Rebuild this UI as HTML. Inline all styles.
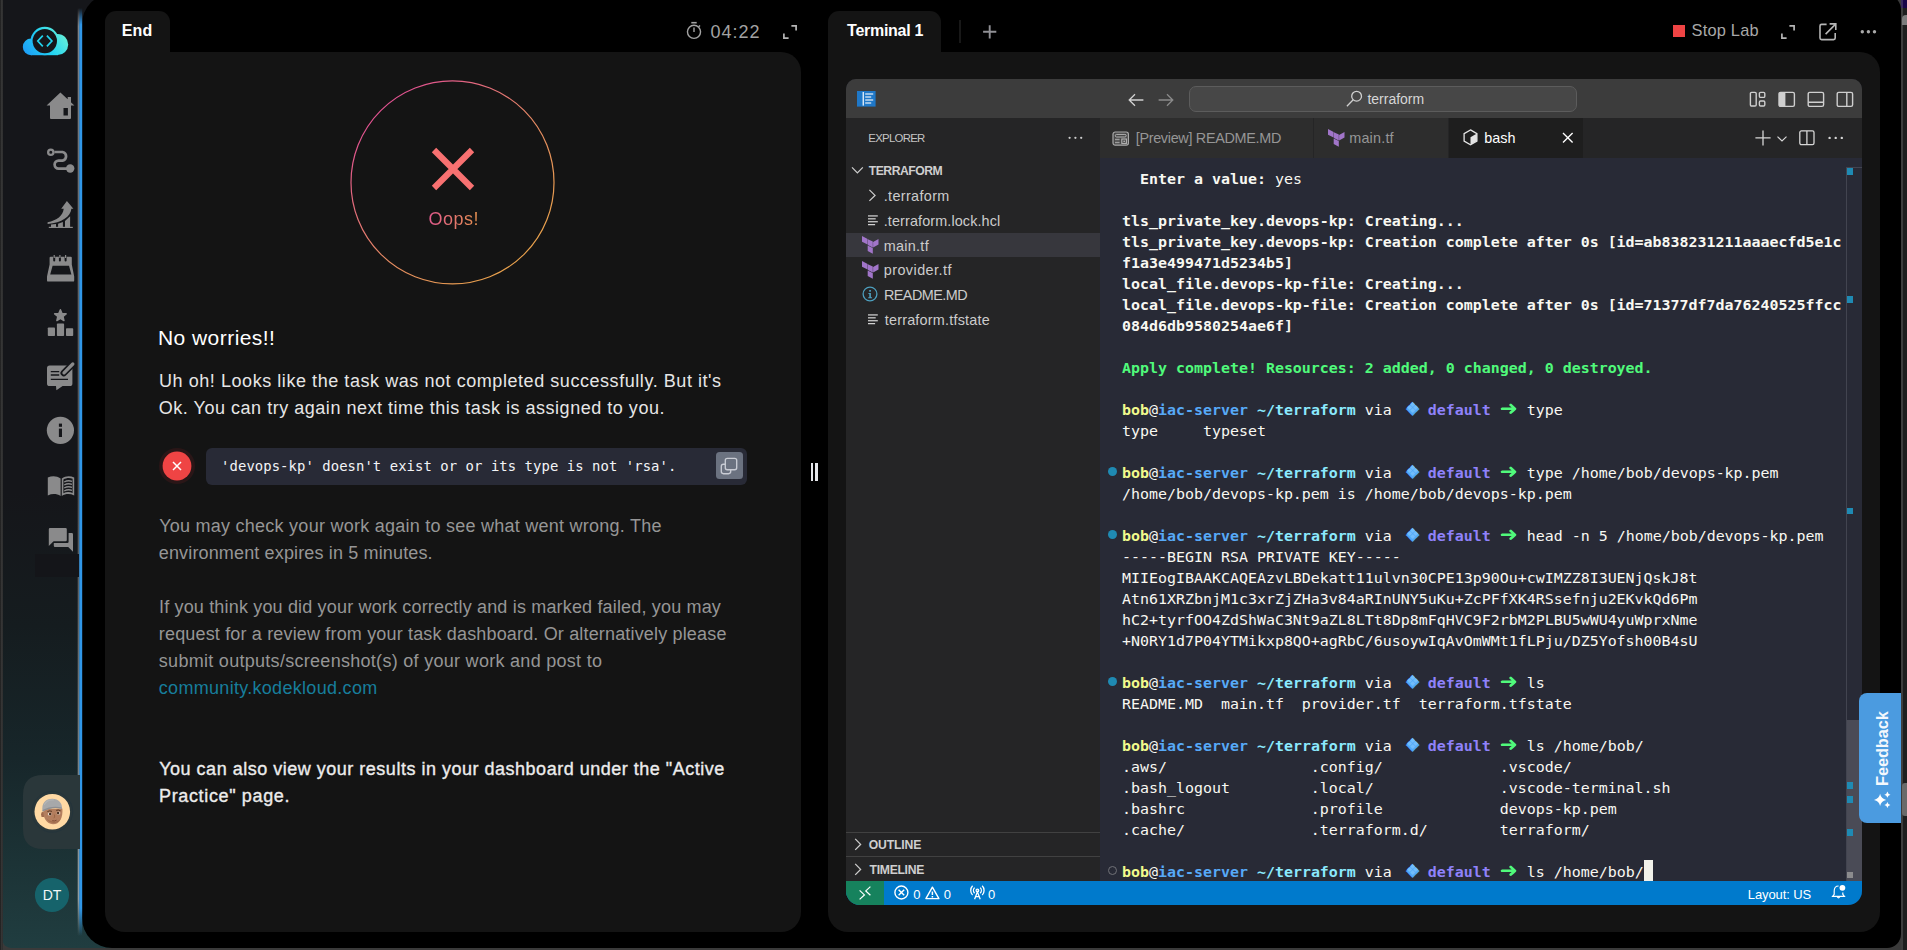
<!DOCTYPE html>
<html lang="en">
<head>
<meta charset="utf-8">
<title>KodeKloud Lab</title>
<style>
*{box-sizing:border-box;margin:0;padding:0}
html,body{width:1907px;height:950px;overflow:hidden;background:#000}
body{position:relative;font-family:"Liberation Sans",sans-serif;color:#fff;-webkit-font-smoothing:antialiased}
.abs{position:absolute}
svg{display:block;position:absolute;overflow:visible}
/* ---------- window frame ---------- */
#frame{position:absolute;left:0;top:0;width:1907px;height:950px;background:#3a3a3a}
#side{position:absolute;left:2px;top:0;width:110px;height:948px;border-radius:0 0 0 9px;background:linear-gradient(180deg,#15161a 0%,#15161a 52%,#151c1f 66%,#17262a 80%,#1c3336 91%,#203d40 100%)}
#sideedge{position:absolute;left:0;top:0;width:3px;height:950px;background:linear-gradient(90deg,#1b1b1b 0,#3a3a3a 60%,#2a2a2a 100%)}
#main{position:absolute;left:82px;top:-6px;width:1819px;height:954.4px;background:#000;border-radius:30px 16px 14px 30px}
#rstrip{position:absolute;left:1901px;top:0;width:6px;height:950px;background:linear-gradient(90deg,#3d3d3d 0,#3d3d3d 2px,#1e1e1e 2.4px,#1e1e1e 100%)}
#glow{position:absolute;left:77px;top:10px;width:5px;height:926px}
/* ---------- panels ---------- */
.panel{position:absolute;background:#141414}
.tab{position:absolute;background:#141414;border-radius:11px 11px 0 0}
.tabt{position:absolute;font-weight:bold;font-size:16px;line-height:20px;white-space:nowrap;color:#fff}
.hdr{position:absolute;white-space:nowrap;color:#a3a3a3}
/* left content */
.p{position:absolute;left:159px;white-space:nowrap;font-size:18px;line-height:27px}
.lt{color:#969696;font-size:18px}
.uh{color:#e6e6e6;font-size:18px}
/* vscode */
#vs{position:absolute;left:846px;top:79px;width:1016px;height:826px;border-radius:10px 10px 14px 14px;overflow:hidden;background:#282a36;font-family:"Liberation Sans",sans-serif}
#vs .t{position:absolute;white-space:nowrap}
#term{position:absolute;left:276px;top:90px;font-family:"DejaVu Sans Mono","Liberation Mono",monospace;font-size:14.95px;line-height:21px;color:#f8f8f2;white-space:pre}
#term b{font-weight:bold}
#term .r{display:block;height:21px}
.y{color:#f1fa8c}.bl{color:#57a9f7}.cy{color:#8be9fd}.pu{color:#8f82fb}.g{color:#50fa7b}
.w2{display:inline-block;width:18px;height:21px;vertical-align:top;position:relative}

.dia i{font-style:normal;position:absolute;left:-0.2px;top:-3.2px;width:24px;text-align:center;color:#51a8f6;font-size:23px;line-height:21px;font-weight:normal}
.dia::before{content:"\2756";position:absolute;left:-0.2px;top:-3.6px;width:24px;text-align:center;color:#72bdfb;font-size:20px;line-height:21px;font-weight:normal;z-index:1}
.arr i{font-style:normal;position:absolute;left:-3.2px;top:-2px;width:24px;text-align:center;color:#50fa7b;font-size:22px;line-height:21px;font-family:"DejaVu Sans",sans-serif;font-weight:bold;transform:scaleY(.9)}
.cur{display:inline-block;width:9px;height:21px;vertical-align:top;background:#f1f1ea;position:relative;top:-2px}
</style>
<style id="fit">
#t_end{letter-spacing:0.100px;margin-left:-0.80px;margin-top:0.60px}
#t_time{letter-spacing:1.000px;margin-left:-0.60px;margin-top:0.80px}
#t_oops{letter-spacing:0.500px;margin-left:0.00px;margin-top:1.20px}
#t_nw{letter-spacing:0.445px;margin-left:-1.00px;margin-top:0.40px}
#t_uh1{letter-spacing:0.557px;margin-left:0.00px;margin-top:0.40px}
#t_uh2{letter-spacing:0.523px;margin-left:-0.20px;margin-top:0.60px}
#t_p1a{letter-spacing:0.252px;margin-left:0.20px;margin-top:1.00px}
#t_p1b{letter-spacing:0.145px;margin-left:-0.20px;margin-top:0.60px}
#t_p2a{letter-spacing:0.168px;margin-left:0.00px;margin-top:1.00px}
#t_p2b{letter-spacing:0.164px;margin-left:-0.20px;margin-top:1.00px}
#t_p2c{letter-spacing:0.288px;margin-left:-0.20px;margin-top:1.00px}
#t_p2d{letter-spacing:0.301px;margin-left:-0.20px;margin-top:1.00px}
#t_p3a{letter-spacing:0.509px;margin-left:0.20px;margin-top:0.00px}
#t_p3b{letter-spacing:0.645px;margin-left:0.00px;margin-top:0.20px}
#t_term1{letter-spacing:-0.279px;margin-left:0.50px;margin-top:1.00px}
#t_stop{letter-spacing:0.214px;margin-left:-0.50px;margin-top:-1.50px}
#t_expl{letter-spacing:-0.716px;margin-left:-0.00px;margin-top:0.00px}
#t_tf{letter-spacing:-0.500px;margin-left:0.50px;margin-top:1.00px}
#t_row0{letter-spacing:0.357px;margin-left:-1.00px;margin-top:1.00px}
#t_row1{letter-spacing:0.123px;margin-left:-1.00px;margin-top:1.00px}
#t_row2{letter-spacing:0.299px;margin-left:-1.00px;margin-top:1.00px}
#t_row3{letter-spacing:0.450px;margin-left:-1.00px;margin-top:1.00px}
#t_row4{letter-spacing:-0.525px;margin-left:-0.80px;margin-top:1.00px}
#t_row5{letter-spacing:0.219px;margin-left:-0.00px;margin-top:1.00px}
#t_outline{letter-spacing:-0.167px;margin-left:0.20px;margin-top:1.00px}
#t_timeline{letter-spacing:-0.314px;margin-left:1.00px;margin-top:0.50px}
#t_tab1{letter-spacing:-0.306px;margin-left:-0.50px;margin-top:0.50px}
#t_tab2{letter-spacing:0.200px;margin-left:-1.00px;margin-top:0.50px}
#t_tab3{letter-spacing:-0.000px;margin-left:-1.00px;margin-top:0.50px}
#t_search{letter-spacing:-0.000px;margin-left:0.00px;margin-top:-0.00px}
#t_s0{letter-spacing:4.900px;margin-left:0.50px;margin-top:2.00px}
#t_s1{letter-spacing:0.000px;margin-left:0.20px;margin-top:2.00px}
#t_s2{letter-spacing:0.000px;margin-left:0.00px;margin-top:2.00px}
#t_lay{letter-spacing:-0.112px;margin-left:-1.00px;margin-top:2.00px}
#t_code{letter-spacing:0.068px;margin-left:-1.50px;margin-top:0.00px}
</style>
</head>
<body>
<div id="frame"></div>
<div id="side"></div>
<div id="sideedge"></div>
<div id="main"></div>
<div id="rstrip"></div>
<div class="abs" id="rs1" style="left:1901px;top:0;width:6px;height:7.6px;background:linear-gradient(90deg,#3b2b5e 0,#3b2b5e 1.8px,#1a0549 2px)"></div>
<div class="abs" style="left:1902.4px;top:15px;width:5px;height:10.4px;background:#7c7c7c;border-radius:4px 0 0 0"></div>
<div class="abs" style="left:1902.2px;top:783px;width:5px;height:33px;background:#6a6a6a;border-radius:3px 0 0 3px"></div>

<!--SIDEBAR-->
<svg id="sidesvg" style="left:0;top:0" width="120" height="950" viewBox="0 0 120 950">
<defs>
<linearGradient id="lg" gradientUnits="userSpaceOnUse" x1="26" y1="56" x2="64" y2="30"><stop offset="0" stop-color="#1d9cf7"/><stop offset=".5" stop-color="#22d3f3"/><stop offset="1" stop-color="#6af0d6"/></linearGradient>
<linearGradient id="bar" gradientUnits="userSpaceOnUse" x1="0" y1="8" x2="0" y2="936"><stop offset="0" stop-color="#3097e8" stop-opacity="0"/><stop offset=".018" stop-color="#3097e8"/><stop offset=".97" stop-color="#3097e8"/><stop offset="1" stop-color="#3097e8" stop-opacity="0"/></linearGradient>
<linearGradient id="barw" gradientUnits="userSpaceOnUse" x1="0" y1="8" x2="0" y2="936"><stop offset="0" stop-color="#cfd6dc" stop-opacity="0"/><stop offset=".02" stop-color="#aeb6bd" stop-opacity=".9"/><stop offset=".5" stop-color="#8f979d" stop-opacity=".55"/><stop offset=".96" stop-color="#c5ccd0" stop-opacity=".9"/><stop offset="1" stop-color="#cfd6dc" stop-opacity="0"/></linearGradient>
<linearGradient id="barsh" x1="0" y1="0" x2="1" y2="0"><stop offset="0" stop-color="#000" stop-opacity="0"/><stop offset="1" stop-color="#000" stop-opacity=".35"/></linearGradient>
</defs>
<!-- glow + blue bar -->
<rect x="77.2" y="8" width="1.2" height="928" fill="url(#barw)" opacity=".3"/>
<rect x="78.2" y="8" width="1.3" height="928" fill="url(#barw)" opacity=".9"/>
<rect x="79.3" y="8" width="2.9" height="928" fill="url(#bar)"/>
<!-- logo -->
<g fill="url(#lg)">
<circle cx="44.8" cy="41" r="14.2"/><circle cx="31.1" cy="46.9" r="8.3"/><circle cx="57.6" cy="44.5" r="10.6"/><rect x="31" y="45" width="27" height="10.2"/>
</g>
<circle cx="44.8" cy="41.1" r="12.2" fill="#15161a"/>
<path d="M42.8 35.6 L37.8 41 L42.8 46.4 M46.9 35.6 L51.9 41 L46.9 46.4" fill="none" stroke="#22d3ee" stroke-width="1.7"/>
<g fill="#8a8a8b">
<!-- home -->
<path d="M60.4 92.4 L74.4 105.6 L71 105.6 L71 118 Q71 119 70 119 L51 119 Q50 119 50 118 L50 105.6 L46.6 105.6 Z M67.7 97 h3.3 v5.5 l-3.3 -3.1 Z"/>
<rect x="63.5" y="108" width="4.4" height="7.5" fill="#15161a"/>
<!-- route -->
<circle cx="70.2" cy="168.5" r="4.2"/>
<!-- growth -->
<path d="M66.9 201 L73.4 208.8 L71.4 208.8 C70.6 216.5 62 223 47.6 223.9 L47.6 222.3 C57 220.6 63 215.5 63.7 208.8 L61.2 208.8 Z"/>
<path d="M51 224.6 L56 224.1 V227 H51 Z"/><path d="M58.1 223.7 L62.9 222 V227 H58.1 Z"/><path d="M65 221 L70.1 216.2 V227 H65 Z"/><rect x="48.8" y="226.8" width="24" height="1.2"/>
<!-- calendar -->
<path d="M50.6 256.8 H70.8 Q71.8 256.8 71.8 257.8 V264.4 L74.2 276.6 V280.4 Q74.2 281.6 73 281.6 H48.2 Q47 281.6 47 280.4 V276.6 L49.6 264.4 V257.8 Q49.6 256.8 50.6 256.8 Z M52.6 265.8 L50.2 274.6 H71.4 L69 265.8 Z" fill-rule="evenodd"/>
<g fill="#15161a"><rect x="53.2" y="256" width="2" height="5.4" rx="1"/><rect x="58.9" y="256" width="2" height="5.4" rx="1"/><rect x="64.6" y="256" width="2" height="5.4" rx="1"/></g>
<rect x="53.6" y="255" width="1.2" height="3"/><rect x="59.3" y="255" width="1.2" height="3"/><rect x="65" y="255" width="1.2" height="3"/>
<!-- leaderboard -->
<path d="M60.40 309.70 L61.99 313.52 L66.11 313.85 L62.97 316.53 L63.93 320.55 L60.40 318.40 L56.87 320.55 L57.83 316.53 L54.69 313.85 L58.81 313.52 Z" stroke="#8a8a8b" stroke-width="1.5" stroke-linejoin="round"/>
<rect x="47.8" y="327.4" width="7.2" height="8.6" rx=".8"/><rect x="56.9" y="323.6" width="7.2" height="12.4" rx=".8"/><rect x="66" y="328.2" width="7.2" height="7.8" rx=".8"/>
<!-- feedback -->
<path d="M49.6 365.6 H69.8 Q72.4 365.6 72.4 368.2 V383.4 Q72.4 386 69.8 386 H62.6 L56.4 390.2 L56 386 H49.6 Q47 386 47 383.4 V368.2 Q47 365.6 49.6 365.6 Z"/>
<g stroke="#15161a" stroke-width="1.3" fill="none"><path d="M50.8 371.6 H59.2 M50.8 375 H59.2 M50.8 379.3 H68"/></g>
<path d="M63.8 373 L72.6 364.2" stroke="#15161a" stroke-width="6.6" stroke-linecap="round"/>
<path d="M64 372.8 L72.8 364" stroke="#8a8a8b" stroke-width="3.3" stroke-linecap="round"/>
<!-- info -->
<circle cx="60.4" cy="430.3" r="13.6"/>
<rect x="58.9" y="423.6" width="3.1" height="3.2" fill="#15161a"/><rect x="58.9" y="428.6" width="3.1" height="8.4" fill="#15161a"/>
<!-- book -->
<path d="M47.8 477.6 C52 475.6 56.6 475.8 60.6 478.4 L60.6 496 C56.6 493.6 52 493.5 47.8 495.6 Z"/>
<path d="M61.8 478.4 C65.6 475.8 70.2 475.6 74.2 477.6 L74.2 495.6 C70.2 493.5 65.6 493.6 61.8 496 Z M63.4 479.6 L63.4 493.2 C66.4 491.8 69.6 491.8 72.6 493 L72.6 478.8 C69.6 477.6 66.4 477.8 63.4 479.6 Z" fill-rule="evenodd"/>
<path d="M64.2 482 C66.8 480.6 69.4 480.5 72 481.4 M64.2 485 C66.8 483.6 69.4 483.5 72 484.4 M64.2 488 C66.8 486.6 69.4 486.5 72 487.4 M64.2 491 C66.8 489.6 69.4 489.5 72 490.4" stroke="#8a8a8b" stroke-width="1.4" fill="none"/>
<!-- forum -->
<path d="M50 528 H65.6 Q66.8 528 66.8 529.2 V540 Q66.8 541.2 65.6 541.2 H53.6 L48.8 546 V529.2 Q48.8 528 50 528 Z"/>
<path d="M68.6 533 H71.8 Q73 533 73 534.2 V551.8 L68.2 547 H55 Q53.8 547 53.8 545.8 V543 H67.4 Q68.6 543 68.6 541.8 Z"/>
</g>
<!-- route strokes -->
<g fill="none" stroke="#8a8a8b">
<circle cx="50.8" cy="152.2" r="2.65" stroke-width="2.3"/>
<path d="M54.4 152 H62.6 A4.4 4.4 0 0 1 62.6 160.6 H58.6 A4 4 0 0 0 58.6 168.6 H67" stroke-width="2.7"/>
</g>
<!-- faint rect -->
<rect x="35" y="554" width="44" height="23" fill="#141519"/>
<!-- avatar box -->
<path d="M43 775 H80 V849 H43 Q23 849 23 829 V795 Q23 775 43 775 Z" fill="#2a373a"/>
<circle cx="52.3" cy="811.8" r="20.4" fill="none" stroke="#24343a" stroke-width="1"/>
<circle cx="52.3" cy="811.7" r="17.8" fill="#ffd9a4"/>
<!-- face -->
<g>
<ellipse cx="42.9" cy="814.4" rx="1.9" ry="2.7" fill="#a06a4c"/>
<path d="M43.4 809 C42.6 817.6 46.4 824 53 824.2 C59.6 824.2 63 818 62.4 808.4 Z" fill="#b37e5e"/>
<path d="M46.6 818.6 C49 824.2 58 824.6 61 818.4 C58.6 822.4 50.4 822.8 46.6 818.6Z" fill="#93603f" opacity=".55"/>
<path d="M42.6 811.6 C41 803 46 798.6 52.4 798.7 C58.6 798.8 62.6 803 61.9 808.8 C56 807 48.6 808 42.6 811.6 Z" fill="#a7a8aa"/>
<path d="M42.6 811.6 C48.6 808 56 807 61.9 808.8 L61.7 807.5 C56 805.8 48.4 806.6 42.5 810 Z" fill="#8d8e92"/>
<path d="M44.2 805 C46 801 50 799.6 54 800" stroke="#b9babc" stroke-width="1.2" fill="none" opacity=".6"/>
<ellipse cx="49.7" cy="814" rx="1.9" ry="1.5" fill="#e9dfd6"/><ellipse cx="58.5" cy="813" rx="1.8" ry="1.5" fill="#e9dfd6"/>
<circle cx="50.1" cy="814" r="1.25" fill="#4a3020"/><circle cx="58.1" cy="813" r="1.25" fill="#4a3020"/>
<path d="M47.4 811.6 Q49.6 810.2 52 811.4 M56.2 810.4 Q58.4 809.4 60.6 810.8" stroke="#50321f" stroke-width=".9" fill="none"/>
<path d="M54.4 814.6 Q55.2 817.6 53.8 818.2" stroke="#93603f" stroke-width=".8" fill="none"/>
<path d="M52.2 820.6 Q54.4 821.4 56.6 820.2" stroke="#7d4a33" stroke-width=".9" fill="none"/>
</g>
<path d="M70 779.6 L79 777.6 M70 842 L79 844.6" stroke="#3a484b" stroke-width=".8" stroke-dasharray="2 2" opacity=".0"/>
<!-- DT -->
<circle cx="52" cy="895" r="17.1" fill="#16636b"/>
<text x="52" y="900" text-anchor="middle" font-family="Liberation Sans, sans-serif" font-size="14" fill="#f2f7f7">DT</text>
</svg>
<!--/SIDEBAR-->
<!--LEFTPANEL-->
<!-- left panel -->
<div class="tab" style="left:105px;top:10.5px;width:65px;height:44px"></div>
<div class="panel" style="left:105px;top:52px;width:696px;height:879.5px;border-radius:0 20px 20px 20px"></div>
<div class="tabt" id="t_end" style="left:122.6px;top:20px">End</div>
<svg style="left:686px;top:21px" width="16" height="19" viewBox="0 0 16 19" fill="none" stroke="#a3a3a3">
<circle cx="8" cy="10.8" r="6.55" stroke-width="1.4"/><path d="M5.3 1.7 H10.7" stroke-width="1.6"/><path d="M8 6.6 V11" stroke-width="1.4"/><path d="M12.6 5.8 L14 4.4" stroke-width="1.4"/>
</svg>
<div class="hdr" id="t_time" style="left:711px;top:20.5px;font-size:18px;line-height:22px">04:22</div>
<svg style="left:783px;top:24.5px" width="14" height="14" viewBox="0 0 14 14" fill="none" stroke="#b5b5b5" stroke-width="1.7">
<path d="M8.4 0.9 H13.1 V5.6 M5.6 13.1 H0.9 V8.4"/>
</svg>
<!-- circle -->
<svg style="left:348px;top:78px" width="210" height="210" viewBox="348 78 210 210">
<defs><linearGradient id="cg" gradientUnits="userSpaceOnUse" x1="385" y1="110" x2="520" y2="255"><stop offset="0" stop-color="#e0528f"/><stop offset=".55" stop-color="#e58a63"/><stop offset="1" stop-color="#e8a04c"/></linearGradient></defs>
<circle cx="452.5" cy="182.4" r="101.5" fill="none" stroke="url(#cg)" stroke-width="1.2"/>
<path d="M434 150 L472 188 M472 150 L434 188" stroke="#f87171" stroke-width="6.2" fill="none"/>
</svg>
<div class="abs" id="t_oops" style="left:428.5px;top:207px;font-size:18px;line-height:22px;white-space:nowrap;background:linear-gradient(90deg,#e25a8c 0%,#e6924f 100%);-webkit-background-clip:text;background-clip:text;color:transparent">Oops!</div>
<!-- text -->
<div class="p" id="t_nw" style="top:323.9px;font-size:21px;line-height:28px;color:#fff">No worries!!</div>
<div class="p uh" id="t_uh1" style="top:367.4px">Uh oh! Looks like the task was not completed successfully. But it's</div>
<div class="p uh" id="t_uh2" style="top:394.4px">Ok. You can try again next time this task is assigned to you.</div>
<!-- error row -->
<svg style="left:160px;top:449px" width="34" height="34" viewBox="0 0 34 34">
<circle cx="17" cy="17" r="18" fill="#2a1617"/><circle cx="17" cy="17" r="14.4" fill="#ef4444"/>
<path d="M13 13 L21 21 M21 13 L13 21" stroke="#fff" stroke-width="1.5" fill="none"/>
</svg>
<div class="abs" style="left:206px;top:447.5px;width:541px;height:37px;border-radius:6px;background:#282a36"></div>
<div class="abs" id="t_code" style="left:222.6px;top:456px;font-family:'DejaVu Sans Mono','Liberation Mono',monospace;font-size:13.9px;line-height:20px;white-space:pre;color:#f3f4f6">'devops-kp' doesn't exist or or its type is not 'rsa'.</div>
<div class="abs" style="left:716px;top:452px;width:27px;height:27.2px;border-radius:3.5px;background:#6b7280"></div>
<svg style="left:720px;top:457px" width="18" height="18" viewBox="0 0 18 18" fill="none" stroke="#c9ccd4" stroke-width="1.35">
<rect x="5.3" y="1.3" width="11.4" height="11.4" rx="2"/><path d="M5.3 7.2 H3.4 Q1.3 7.2 1.3 9.3 V14.6 Q1.3 16.7 3.4 16.7 H8.6 Q10.7 16.7 10.7 14.6 V12.8"/>
</svg>
<div class="p lt" id="t_p1a" style="top:512.4px">You may check your work again to see what went wrong. The</div>
<div class="p lt" id="t_p1b" style="top:539.4px">environment expires in 5 minutes.</div>
<div class="p lt" id="t_p2a" style="top:593.4px">If you think you did your work correctly and is marked failed, you may</div>
<div class="p lt" id="t_p2b" style="top:620.4px">request for a review from your task dashboard. Or alternatively please</div>
<div class="p lt" id="t_p2c" style="top:647.4px">submit outputs/screenshot(s) of your work and post to</div>
<div class="p lt" id="t_p2d" style="top:674.4px;color:#177e9c">community.kodekloud.com</div>
<div class="p uh" id="t_p3a" style="top:755.6px;color:#ececec;-webkit-text-stroke:.35px #ececec">You can also view your results in your dashboard under the "Active</div>
<div class="p uh" id="t_p3b" style="top:782.6px;color:#ececec;-webkit-text-stroke:.35px #ececec">Practice" page.</div>
<!-- splitter -->
<div class="abs" style="left:810.8px;top:463px;width:2.7px;height:18px;background:#e5e7eb"></div>
<div class="abs" style="left:815.4px;top:463px;width:2.7px;height:18px;background:#e5e7eb"></div>
<!--/LEFTPANEL-->
<!--RIGHTPANEL-->
<!-- right panel -->
<div class="tab" style="left:828px;top:10.5px;width:113px;height:44px"></div>
<div class="panel" style="left:828px;top:52px;width:1052px;height:879.5px;border-radius:0 20px 20px 20px"></div>
<div class="tabt" id="t_term1" style="left:846.6px;top:20px">Terminal 1</div>
<div class="abs" style="left:959px;top:20px;width:2px;height:23px;background:#181818"></div>
<svg style="left:983.4px;top:24.8px" width="14" height="14" viewBox="0 0 14 14" fill="none" stroke="#909095" stroke-width="1.9"><path d="M6.7 0.2 V13.4 M0.1 6.8 H13.3"/></svg>
<div class="abs" style="left:1673px;top:25.3px;width:12.4px;height:12px;background:#ef4444"></div>
<div class="hdr" id="t_stop" style="left:1692px;top:20px;font-size:16.4px;line-height:22px;color:#a8a8a8">Stop Lab</div>
<svg style="left:1780.5px;top:24.5px" width="14" height="14" viewBox="0 0 14 14" fill="none" stroke="#b5b5b5" stroke-width="1.7"><path d="M8.4 0.9 H13.1 V5.6 M5.6 13.1 H0.9 V8.4"/></svg>
<svg style="left:1819px;top:23px" width="18" height="18" viewBox="0 0 18 18" fill="none" stroke="#b5b5b5" stroke-width="1.6"><path d="M7.6 1.4 H2.6 Q1 1.4 1 3 V15 Q1 16.6 2.6 16.6 H14.6 Q16.2 16.6 16.2 15 V10"/><path d="M10.6 0.9 H16.8 V7.1 M16.6 1.1 L6.6 11.1"/></svg>
<svg style="left:1860px;top:29px" width="17" height="6" viewBox="0 0 17 6" fill="#a9a9a9"><circle cx="2.3" cy="2.7" r="1.7"/><circle cx="8.4" cy="2.7" r="1.7"/><circle cx="14.5" cy="2.7" r="1.7"/></svg>
<div id="vs">
<div class="abs" style="left:0;top:0;width:1016px;height:39px;background:#3c3c3c"></div>
<svg style="left:11px;top:12px" width="19" height="16" viewBox="0 0 19 16"><rect x="0" y="0" width="18.6" height="15.6" fill="#1f78c8"/><rect x="1" y="1" width="3.4" height="13.6" fill="#1f78c8"/><rect x="5.6" y="1" width="1.3" height="13.6" fill="#eaf2fb"/><g fill="#eaf2fb"><rect x="8.2" y="2.4" width="8" height="1.2"/><rect x="8.2" y="5.4" width="6" height="1.2"/><rect x="8.2" y="8.4" width="8" height="1.2"/><rect x="8.2" y="11.4" width="6" height="1.2"/></g></svg>
<svg style="left:282px;top:13.7px" width="16" height="14" viewBox="0 0 16 14" fill="none" stroke="#d0d0d0" stroke-width="1.3"><path d="M15.4 7 H1.4 M7 1.2 L1.2 7 L7 12.8"/></svg>
<svg style="left:312px;top:13.7px" width="16" height="14" viewBox="0 0 16 14" fill="none" stroke="#8a8a8a" stroke-width="1.3"><path d="M0.6 7 H14.6 M9 1.2 L14.8 7 L9 12.8"/></svg>
<div class="abs" style="left:343px;top:6.5px;width:388px;height:26.4px;border-radius:7px;background:#474747;border:1px solid #5c5c5c"></div>
<svg style="left:500px;top:11px" width="17" height="17" viewBox="0 0 17 17" fill="none" stroke="#cfcfcf" stroke-width="1.3"><circle cx="10.6" cy="6.2" r="4.9"/><path d="M7.2 9.8 L0.9 16.2"/></svg>
<div class="t" id="t_search" style="left:521.4px;top:10px;font-size:14px;line-height:20px;color:#d6d6d6">terraform</div>
<svg style="left:903px;top:12px" width="18" height="17" viewBox="0 0 18 17" fill="none" stroke="#cfcfcf" stroke-width="1.4"><rect x="1.4" y="1.4" width="5.8" height="13.6" rx="1.2"/><rect x="10.4" y="1.4" width="5.4" height="5" rx="1.2"/><rect x="10.4" y="10" width="5.4" height="5" rx="1.2"/></svg>
<svg style="left:932px;top:12px" width="18" height="17" viewBox="0 0 18 17"><rect x="1" y="1.4" width="15.4" height="14" rx="1.6" fill="none" stroke="#cfcfcf" stroke-width="1.4"/><path d="M1 3 Q1 1.4 2.6 1.4 H7.4 V15.4 H2.6 Q1 15.4 1 13.8 Z" fill="#cfcfcf"/></svg>
<svg style="left:961px;top:12px" width="18" height="17" viewBox="0 0 18 17" fill="none" stroke="#cfcfcf" stroke-width="1.4"><rect x="1.2" y="1.4" width="15.4" height="14" rx="1.6"/><path d="M1.2 11.2 H16.6"/></svg>
<svg style="left:990px;top:12px" width="18" height="17" viewBox="0 0 18 17" fill="none" stroke="#cfcfcf" stroke-width="1.4"><rect x="1.2" y="1.4" width="15.4" height="14" rx="1.6"/><path d="M10.8 1.4 V15.4"/></svg>
<div class="abs" style="left:0;top:39px;width:254px;height:763px;background:#252526"></div>
<div class="t" id="t_expl" style="left:22.3px;top:50px;font-size:11.4px;line-height:18px;color:#c4c4c4">EXPLORER</div>
<svg style="left:222px;top:57px" width="15" height="4" viewBox="0 0 15 4" fill="#cccccc"><circle cx="1.6" cy="1.8" r="1.15"/><circle cx="7.4" cy="1.8" r="1.15"/><circle cx="13.2" cy="1.8" r="1.15"/></svg>
<svg style="left:5px;top:87px" width="13" height="9" viewBox="0 0 13 9" fill="none" stroke="#cccccc" stroke-width="1.3"><path d="M1 1.4 L6.4 6.9 L11.8 1.4"/></svg>
<div class="t" id="t_tf" style="left:22.3px;top:82px;font-size:12.2px;line-height:18px;font-weight:bold;color:#cfcfcf">TERRAFORM</div>
<div class="abs" style="left:0;top:154px;width:254px;height:24.2px;background:#37373d"></div>
<div class="t" id="t_row0" style="left:38.7px;top:106.1px;font-size:14.4px;line-height:20px;color:#cccccc">.terraform</div>
<svg style="left:22px;top:110.1px" width="9" height="13" viewBox="0 0 9 13" fill="none" stroke="#cccccc" stroke-width="1.3"><path d="M1.4 0.9 L7 6.4 L1.4 11.9"/></svg>
<div class="t" id="t_row1" style="left:38.7px;top:130.8px;font-size:14.4px;line-height:20px;color:#cccccc">.terraform.lock.hcl</div>
<svg style="left:21.7px;top:136.1px" width="11" height="12" viewBox="0 0 11 12" fill="#d0d0d0"><rect x="0" y="0.3" width="9.8" height="1.25"/><rect x="0" y="3.2" width="7.7" height="1.25"/><rect x="0" y="6.1" width="9.8" height="1.25"/><rect x="0" y="9" width="7.1" height="1.25"/></svg>
<div class="t" id="t_row2" style="left:38.7px;top:155.6px;font-size:14.4px;line-height:20px;color:#cccccc">main.tf</div>
<svg style="left:16.2px;top:157.2px" width="17" height="18" viewBox="0 0 17 18" fill="#a175c9"><path d="M0 0 L5.6 3 V8.5 L0 5.8 Z"/><path d="M5.9 3.2 L10.8 5.6 V11.5 L5.9 9 Z"/><path d="M11.1 6 L16.5 3 V8.6 L11.1 11.6 Z"/><path d="M5.7 9.6 L10.8 12 V17.8 L5.7 15 Z"/></svg>
<div class="t" id="t_row3" style="left:38.7px;top:180.2px;font-size:14.4px;line-height:20px;color:#cccccc">provider.tf</div>
<svg style="left:16.2px;top:181.8px" width="17" height="18" viewBox="0 0 17 18" fill="#a175c9"><path d="M0 0 L5.6 3 V8.5 L0 5.8 Z"/><path d="M5.9 3.2 L10.8 5.6 V11.5 L5.9 9 Z"/><path d="M11.1 6 L16.5 3 V8.6 L11.1 11.6 Z"/><path d="M5.7 9.6 L10.8 12 V17.8 L5.7 15 Z"/></svg>
<div class="t" id="t_row4" style="left:38.7px;top:205.0px;font-size:14.4px;line-height:20px;color:#cccccc">README.MD</div>
<svg style="left:16.4px;top:207.4px" width="16" height="16" viewBox="0 0 16 16"><circle cx="8" cy="8" r="6.9" fill="none" stroke="#4d9fbe" stroke-width="1.3"/><rect x="7.2" y="4" width="1.7" height="1.7" fill="#4d9fbe"/><path d="M6.4 7 H8.9 V11.2 H10 V12.2 H6.2 V11.2 H7.3 V8 H6.4 Z" fill="#4d9fbe"/></svg>
<div class="t" id="t_row5" style="left:38.7px;top:229.8px;font-size:14.4px;line-height:20px;color:#cccccc">terraform.tfstate</div>
<svg style="left:21.7px;top:235.1px" width="11" height="12" viewBox="0 0 11 12" fill="#d0d0d0"><rect x="0" y="0.3" width="9.8" height="1.25"/><rect x="0" y="3.2" width="7.7" height="1.25"/><rect x="0" y="6.1" width="9.8" height="1.25"/><rect x="0" y="9" width="7.1" height="1.25"/></svg>
<div class="abs" style="left:0;top:753.4px;width:254px;height:1px;background:#414141"></div>
<svg style="left:8.2px;top:759.1px" width="8" height="13" viewBox="0 0 8 13" fill="none" stroke="#cccccc" stroke-width="1.3"><path d="M1.2 0.9 L6.6 6.4 L1.2 11.9"/></svg>
<div class="t" id="t_outline" style="left:22.6px;top:756.3px;font-size:12.2px;line-height:18px;font-weight:bold;color:#cfcfcf">OUTLINE</div>
<div class="abs" style="left:0;top:777.4px;width:254px;height:1px;background:#414141"></div>
<svg style="left:8.2px;top:783.9px" width="8" height="13" viewBox="0 0 8 13" fill="none" stroke="#cccccc" stroke-width="1.3"><path d="M1.2 0.9 L6.6 6.4 L1.2 11.9"/></svg>
<div class="t" id="t_timeline" style="left:22.6px;top:781.1px;font-size:12.2px;line-height:18px;font-weight:bold;color:#cfcfcf">TIMELINE</div>
<div class="abs" style="left:254px;top:39px;width:762px;height:39.6px;background:#252526"></div>
<div class="abs" style="left:254px;top:39px;width:213.4px;height:39.6px;background:#2d2d2d"></div>
<div class="abs" style="left:468.4px;top:39px;width:134px;height:39.6px;background:#2d2d2d"></div>
<div class="abs" style="left:603px;top:39px;width:134.4px;height:39.6px;background:#1e1e1e"></div>
<svg style="left:265.6px;top:51.6px" width="18" height="16" viewBox="0 0 18 16"><rect x="1" y="1" width="15.4" height="13.2" rx="2.2" fill="#474747" stroke="#a9a9a9" stroke-width="1.2"/><rect x="3.3" y="3.4" width="10.9" height="2.6" rx="1.3" fill="none" stroke="#b4b4b4" stroke-width="1"/><path d="M3 8.6 H7.6 M3 11.5 H7.6" stroke="#9c9c9c" stroke-width="1.5"/><rect x="9.8" y="8" width="4.6" height="4.4" fill="none" stroke="#b4b4b4" stroke-width="1.1"/><rect x="11.5" y="9.6" width="1.3" height="1.3" fill="#d0d0d0"/></svg>
<div class="t" id="t_tab1" style="left:290.2px;top:48.6px;font-size:14.4px;line-height:20px;color:#969696">[Preview] README.MD</div>
<svg style="left:481.8px;top:49.8px" width="17" height="18" viewBox="0 0 17 18" fill="#a175c9"><path d="M0 0 L5.6 3 V8.5 L0 5.8 Z"/><path d="M5.9 3.2 L10.8 5.6 V11.5 L5.9 9 Z"/><path d="M11.1 6 L16.5 3 V8.6 L11.1 11.6 Z"/><path d="M5.7 9.6 L10.8 12 V17.8 L5.7 15 Z"/></svg>
<div class="t" id="t_tab2" style="left:504.2px;top:48.6px;font-size:14.4px;line-height:20px;color:#969696">main.tf</div>
<svg style="left:617px;top:50.4px" width="15" height="17" viewBox="0 0 15 17"><path d="M7.5 0.9 L13.9 4.6 V12 L7.5 15.7 L1.1 12 V4.6 Z" fill="none" stroke="#e4e4e4" stroke-width="1.3"/><path d="M7.5 8.3 L13.9 4.6 V12 L7.5 15.7 Z" fill="#e4e4e4"/></svg>
<div class="t" id="t_tab3" style="left:639.2px;top:48.6px;font-size:14.4px;line-height:20px;color:#ffffff">bash</div>
<svg style="left:716px;top:53.4px" width="12" height="12" viewBox="0 0 12 12" fill="none" stroke="#ffffff" stroke-width="1.35"><path d="M1 1 L10.6 10.6 M10.6 1 L1 10.6"/></svg>
<svg style="left:908.6px;top:50.6px" width="16" height="16" viewBox="0 0 16 16" fill="none" stroke="#d6d6d6" stroke-width="1.3"><path d="M8 0.4 V15.4 M0.4 7.9 H15.6"/></svg>
<svg style="left:930.6px;top:56.6px" width="10" height="6" viewBox="0 0 10 6" fill="none" stroke="#d6d6d6" stroke-width="1.2"><path d="M0.5 0.6 L5 5 L9.5 0.6"/></svg>
<svg style="left:953.4px;top:50.8px" width="16" height="16" viewBox="0 0 16 16" fill="none" stroke="#d6d6d6" stroke-width="1.3"><rect x="0.8" y="0.9" width="14.2" height="13.8" rx="1.6"/><path d="M7.9 0.9 V14.7"/></svg>
<svg style="left:982.4px;top:57px" width="16" height="4" viewBox="0 0 16 4" fill="#d6d6d6"><circle cx="1.6" cy="1.9" r="1.2"/><circle cx="7.7" cy="1.9" r="1.2"/><circle cx="13.8" cy="1.9" r="1.2"/></svg>
<div class="abs" style="left:1000.4px;top:88.4px;width:16px;height:714px;border-left:1px solid #424450;border-top:1px solid #424450"></div>
<div class="abs" style="left:1001.4px;top:641px;width:15px;height:161px;background:#4a4b56"></div>
<div class="abs" style="left:1001.4px;top:89.2px;width:5.4px;height:6.6px;background:#1f8ab3"></div>
<div class="abs" style="left:1001.4px;top:217.2px;width:5.4px;height:6.6px;background:#1f8ab3"></div>
<div class="abs" style="left:1001.4px;top:428.7px;width:5.4px;height:6.6px;background:#1f8ab3"></div>
<div class="abs" style="left:1001.4px;top:703.2px;width:5.4px;height:6.6px;background:#1f8ab3"></div>
<div class="abs" style="left:1001.4px;top:717.2px;width:5.4px;height:6.6px;background:#1f8ab3"></div>
<div class="abs" style="left:1001.4px;top:750.2px;width:5.4px;height:6.6px;background:#1f8ab3"></div>
<div class="abs" style="left:1001.4px;top:792.6px;width:5.4px;height:6.6px;background:#8c8c8e"></div>
<div id="term"><span class="r">  <b>Enter a value:</b> yes</span><span class="r"></span><span class="r"><b>tls_private_key.devops-kp: Creating...</b></span><span class="r"><b>tls_private_key.devops-kp: Creation complete after 0s [id=ab838231211aaaecfd5e1c</b></span><span class="r"><b>f1a3e499471d5234b5]</b></span><span class="r"><b>local_file.devops-kp-file: Creating...</b></span><span class="r"><b>local_file.devops-kp-file: Creation complete after 0s [id=71377df7da76240525ffcc</b></span><span class="r"><b>084d6db9580254ae6f]</b></span><span class="r"></span><span class="r"><b class="g">Apply complete! Resources: 2 added, 0 changed, 0 destroyed.</b></span><span class="r"></span><span class="r"><b class="y">bob</b>@<b class="bl">iac-server</b> <b class="cy">~/terraform</b> via <span class="w2 dia"><i>◆</i></span> <b class="pu">default</b> <b class="g w2 arr"><i>➜</i></b> type</span><span class="r">type     typeset</span><span class="r"></span><span class="r"><b class="y">bob</b>@<b class="bl">iac-server</b> <b class="cy">~/terraform</b> via <span class="w2 dia"><i>◆</i></span> <b class="pu">default</b> <b class="g w2 arr"><i>➜</i></b> type /home/bob/devops-kp.pem</span><span class="r">/home/bob/devops-kp.pem is /home/bob/devops-kp.pem</span><span class="r"></span><span class="r"><b class="y">bob</b>@<b class="bl">iac-server</b> <b class="cy">~/terraform</b> via <span class="w2 dia"><i>◆</i></span> <b class="pu">default</b> <b class="g w2 arr"><i>➜</i></b> head -n 5 /home/bob/devops-kp.pem</span><span class="r">-----BEGIN RSA PRIVATE KEY-----</span><span class="r">MIIEogIBAAKCAQEAzvLBDekatt11ulvn30CPE13p90Ou+cwIMZZ8I3UENjQskJ8t</span><span class="r">Atn61XRZbnjM1c3xrZjZHa3v84aRInUNY5uKu+ZcPFfXK4RSsefnju2EKvkQd6Pm</span><span class="r">hC2+tyrfOO4ZdShWaC3Nt9aZL8LTt8Dp8mFqHVC9F2rbM2PLBU5wWU4yuWprxNme</span><span class="r">+N0RY1d7P04YTMikxp8QO+agRbC/6usoywIqAvOmWMt1fLPju/DZ5Yofsh00B4sU</span><span class="r"></span><span class="r"><b class="y">bob</b>@<b class="bl">iac-server</b> <b class="cy">~/terraform</b> via <span class="w2 dia"><i>◆</i></span> <b class="pu">default</b> <b class="g w2 arr"><i>➜</i></b> ls</span><span class="r">README.MD  main.tf  provider.tf  terraform.tfstate</span><span class="r"></span><span class="r"><b class="y">bob</b>@<b class="bl">iac-server</b> <b class="cy">~/terraform</b> via <span class="w2 dia"><i>◆</i></span> <b class="pu">default</b> <b class="g w2 arr"><i>➜</i></b> ls /home/bob/</span><span class="r">.aws/                .config/             .vscode/</span><span class="r">.bash_logout         .local/              .vscode-terminal.sh</span><span class="r">.bashrc              .profile             devops-kp.pem</span><span class="r">.cache/              .terraform.d/        terraform/</span><span class="r"></span><span class="r"><b class="y">bob</b>@<b class="bl">iac-server</b> <b class="cy">~/terraform</b> via <span class="w2 dia"><i>◆</i></span> <b class="pu">default</b> <b class="g w2 arr"><i>➜</i></b> ls /home/bob/<span class="cur"></span></span></div>
<div class="abs" style="left:261.6px;top:388.4px;width:9px;height:9px;border-radius:50%;background:#1f8ab3"></div>
<div class="abs" style="left:261.6px;top:451.4px;width:9px;height:9px;border-radius:50%;background:#1f8ab3"></div>
<div class="abs" style="left:261.6px;top:598.4px;width:9px;height:9px;border-radius:50%;background:#1f8ab3"></div>
<div class="abs" style="left:261.6px;top:787.4px;width:9px;height:9px;border-radius:50%;border:1.9px solid #707177"></div>
<div class="abs" style="left:0;top:801.8px;width:1016px;height:24.2px;background:#007acc"></div>
<div class="abs" style="left:0;top:801.8px;width:38px;height:24.2px;background:#16825d"></div>
<svg style="left:13.4px;top:807px" width="12" height="14" viewBox="0 0 12 14" fill="none" stroke="#fff" stroke-width="1.25"><path d="M0.6 4.4 L5.4 8.9 L0.6 13.4 M11.4 0.6 L6.8 4.9 L11.4 9.2"/></svg>
<svg style="left:48px;top:806.4px" width="15" height="15" viewBox="0 0 15 15" fill="none" stroke="#fff" stroke-width="1.4"><circle cx="7.4" cy="7.5" r="6.5"/><path d="M4.6 4.7 L10.2 10.3 M10.2 4.7 L4.6 10.3"/></svg>
<div class="t" id="t_s0" style="left:66.8px;top:805.2px;font-size:13px;line-height:18px;color:#fff">0</div>
<svg style="left:79px;top:806.6px" width="15" height="14" viewBox="0 0 15 14" fill="none" stroke="#fff" stroke-width="1.4"><path d="M7.4 1.2 L13.9 12.6 H0.9 Z" stroke-linejoin="round"/><path d="M7.4 5.6 V9 M7.4 10 V11.4" stroke-width="1.5"/></svg>
<div class="t" id="t_s1" style="left:97.6px;top:805.2px;font-size:13px;line-height:18px;color:#fff">0</div>
<svg style="left:124px;top:806px" width="15" height="15" viewBox="0 0 15 15" fill="none" stroke="#fff" stroke-width="1.3"><circle cx="7.4" cy="5.4" r="1.3"/><path d="M4.6 14.2 L7.4 6.8 L10.2 14.2 M5.6 11.6 H9.2"/><path d="M4.6 2.6 A4 4 0 0 0 4.6 8.2 M10.2 2.6 A4 4 0 0 1 10.2 8.2 M2.6 0.8 A6.6 6.6 0 0 0 2.6 10 M12.2 0.8 A6.6 6.6 0 0 1 12.2 10"/></svg>
<div class="t" id="t_s2" style="left:142px;top:805.2px;font-size:13px;line-height:18px;color:#fff">0</div>
<div class="t" id="t_lay" style="left:902.8px;top:805.2px;font-size:13px;line-height:18px;color:#fff">Layout: US</div>
<svg style="left:984.6px;top:805.4px" width="16" height="16" viewBox="0 0 16 16"><path d="M7.6 2 C4.6 2 3.2 4.4 3.2 7 V10.4 L1.6 12.4 H13.4 L11.8 10.4 V8.6" fill="none" stroke="#fff" stroke-width="1.2"/><path d="M6.2 12.8 Q7.5 15 8.8 12.8" fill="none" stroke="#fff" stroke-width="1.1"/><circle cx="11.4" cy="3.8" r="2.9" fill="#fff"/></svg>
</div>
<div class="abs" style="left:1859.4px;top:693px;width:41.6px;height:130.4px;border-radius:8px 0 0 8px;background:#4b9be0"></div>
<div class="abs" id="t_fb" style="left:1869.8px;top:785.8px;width:0;height:0"><div style="position:absolute;left:0;top:0;transform-origin:0 0;transform:rotate(-90deg);font-size:16.4px;line-height:24px;font-weight:bold;white-space:nowrap;color:#f4f8fd;width:80px;height:24px;letter-spacing:-0.1px">Feedback</div></div>
<svg style="left:1873px;top:791px" width="20" height="20" viewBox="0 0 20 20" fill="#fff"><path d="M7.1 2.8 Q8.1 7.9 13.2 8.9 Q8.1 9.9 7.1 15 Q6.1 9.9 1 8.9 Q6.1 7.9 7.1 2.8 Z"/><path d="M14.4 0.6 Q14.9 3.2 17.5 3.7 Q14.9 4.2 14.4 6.8 Q13.9 4.2 11.3 3.7 Q13.9 3.2 14.4 0.6 Z"/><path d="M14.4 11 Q14.9 13.5 17.4 14 Q14.9 14.5 14.4 17 Q13.9 14.5 11.4 14 Q13.9 13.5 14.4 11 Z"/></svg>
<!--/RIGHTPANEL-->
</body>
</html>
